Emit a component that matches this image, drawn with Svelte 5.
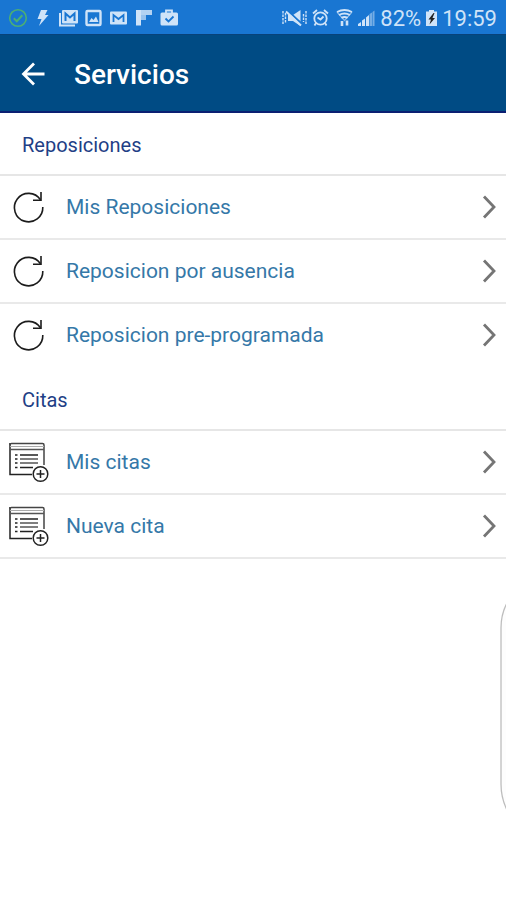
<script>
    const sections = [
        {
            title: 'Reposiciones',
            icon: 'refresh',
            items: ['Mis Reposiciones', 'Reposicion por ausencia', 'Reposicion pre-programada']
        },
        {
            title: 'Citas',
            icon: 'form',
            items: ['Mis citas', 'Nueva cita']
        }
    ];
</script>

<style>
    :global(body) {
        margin: 0;
        background-color: #fff;
        font-family: Roboto, sans-serif;
    }

    .screen {
        position: relative;
        min-height: 100vh;
        overflow: hidden;
    }

    .status {
        display: flex;
        justify-content: space-between;
        align-items: center;
        box-sizing: border-box;
        height: 34px;
        padding: 2px 9px 0 8px;
        background-color: #1976d2;
        color: #cfe3f8;
        font-size: 22px;
    }

    .status div {
        display: flex;
        align-items: center;
    }

    .notifications {
        gap: 5px;
    }

    .system {
        gap: 4px;
    }

    .toolbar {
        display: flex;
        align-items: center;
        box-sizing: border-box;
        height: 79px;
        padding: 2px 18px 0;
        gap: 26px;
        background-color: #004b84;
        border-top: 1px solid #08427a;
        border-bottom: 2px solid #0b1f72;
        color: #fff;
    }

    .back {
        display: flex;
        padding: 0;
        border: none;
        background: none;
        color: inherit;
        cursor: pointer;
    }

    h1 {
        margin: 0;
        font-size: 28px;
        font-weight: 500;
    }

    h2 {
        box-sizing: border-box;
        height: 63px;
        margin: 0;
        padding-left: 22px;
        line-height: 64px;
        font-size: 20px;
        font-weight: 400;
        color: #1f3f86;
        border-bottom: 2px solid #e6e6e6;
    }

    ul {
        margin: 0;
        padding: 0;
        list-style: none;
    }

    li {
        box-sizing: border-box;
        height: 64px;
        border-bottom: 2px solid #e9e9e9;
    }

    section:not(:last-child) li:last-child {
        border-bottom-color: transparent;
    }

    li a {
        display: flex;
        align-items: center;
        height: 100%;
        padding: 0 9px 0 8px;
        font-size: 21px;
        color: #3578a8;
        text-decoration: none;
    }

    .label {
        flex: 1;
        margin-left: 16px;
    }

    .edge {
        position: absolute;
        right: 0;
        top: 602px;
    }
</style>

<div class="screen">
    <div class="status">
        <div class="notifications">
            <svg width="20" height="20" viewBox="0 0 20 20" fill="none" stroke="#4caf73" stroke-width="1.6">
                <circle cx="10" cy="10" r="8.3" />
                <path d="M5.8 10.3l3 2.9 5.5-6" stroke-width="2" />
            </svg>
            <svg width="20" height="20" viewBox="0 0 20 20" fill="currentColor">
                <path d="M8 2h6.500l-2.500 5h3.500L6 18l2.500-7H4.500z" />
            </svg>
            <svg width="21" height="20" viewBox="0 0 21 20">
                <path d="M2 5v12.500h15" fill="none" stroke="currentColor" stroke-width="2" />
                <rect x="4" y="2" width="16" height="13.500" rx="1" fill="currentColor" />
                <path d="M7.500 13V5.500l4.500 4 4.500-4V13" fill="none" stroke="#1976d2" stroke-width="2" />
            </svg>
            <svg width="20" height="20" viewBox="0 0 20 20">
                <rect x="2.500" y="3" width="14" height="14" rx="1" fill="none" stroke="currentColor" stroke-width="2.400" />
                <path d="M5 14l2.500-4 2 2 2.500-3.500L14.500 14z" fill="currentColor" />
            </svg>
            <svg width="20" height="20" viewBox="0 0 20 20">
                <rect x="1" y="3.500" width="17" height="13" rx="1" fill="currentColor" />
                <path d="M4.500 14V7l5 4 5-4v7" fill="none" stroke="#1976d2" stroke-width="1.800" />
            </svg>
            <svg width="20" height="20" viewBox="0 0 20 20" fill="currentColor">
                <path d="M2 2h16v5H2z" opacity="0.85" />
                <path d="M2 2h5v15.500H2z" />
                <path d="M7 7h5v5H7z" opacity="0.7" />
            </svg>
            <svg width="22" height="20" viewBox="0 0 22 20">
                <rect x="1.500" y="4.500" width="17.500" height="13" rx="1.500" fill="currentColor" />
                <path d="M7 5V2.500h6V5" fill="none" stroke="currentColor" stroke-width="1.800" />
                <path d="M6.500 10.500l3 3 5-5" fill="none" stroke="#1976d2" stroke-width="1.800" />
            </svg>
        </div>
        <div class="system">
            <svg width="27" height="20" viewBox="0 0 27 20">
                <path d="M7 7h5l7.500-5v16L12 13H7z" fill="currentColor" />
                <path d="M6.500 2.500l15 14" stroke="#1976d2" stroke-width="2" />
                <path d="M5 3.500l15 14" stroke="currentColor" stroke-width="2" />
                <path d="M2 3v14M4.500 5v10M22.500 6v8M25 3v14" stroke="currentColor" stroke-width="1.400" stroke-dasharray="2.500 1" />
            </svg>
            <svg width="17" height="20" viewBox="0 0 17 20" fill="none" stroke="currentColor" stroke-width="1.800">
                <circle cx="8.500" cy="10.500" r="6.200" />
                <path d="M5.500 9.500l3 2 3-3M1 5.500L5 2M16 5.500L12 2M4 15l-1.500 2.500M13 15l1.500 2.500" />
            </svg>
            <svg width="20" height="20" viewBox="0 0 20 20" fill="none" stroke="currentColor" stroke-width="1.900">
                <path d="M4 4q7.500-4 15 0M6 7q5.500-3 11 0M8.500 10q3-2 6 0" />
                <path d="M4 4l7.500 8.500L19 4" stroke-width="1.200" opacity="0.600" />
                <path d="M9 18v-5M14 12.500v5" stroke-width="2.600" />
            </svg>
            <svg width="19" height="20" viewBox="0 0 19 20" fill="currentColor">
                <path d="M1 18v-2l3-2v4zM5 18v-5.500l3-2V18zM9 18V9.500L12 7v11z" />
                <path d="M12.500 18V6L15 4.500V18zM15.500 18V4l2-1.500V18z" opacity="0.500" />
            </svg>
            <span>82%</span>
            <svg width="13" height="20" viewBox="0 0 13 20">
                <path d="M1 3.500h3V2h5v1.500h3V18H1z" fill="currentColor" />
                <path d="M8.500 5L3.500 11.500H6L4.500 16.500 10 10H7.500l2-5z" fill="#222" />
            </svg>
            <span>19:59</span>
        </div>
    </div>

    <header class="toolbar">
        <button class="back" aria-label="Volver">
            <svg width="30" height="30" viewBox="0 0 30 30" fill="none" stroke="currentColor" stroke-width="2.800">
                <path d="M26.500 15H6M16 4.500L5.500 15 16 25.500" />
            </svg>
        </button>
        <h1>Servicios</h1>
    </header>

    <main>
        {#each sections as section}
            <section>
                <h2>{section.title}</h2>
                <ul>
                    {#each section.items as item}
                        <li>
                            <a href="#servicio">
                                {#if section.icon === 'refresh'}
                                    <svg width="42" height="42" viewBox="0 0 42 42" fill="none" stroke="#1c1c1c" stroke-width="1.600">
                                        <path d="M34.800 21a14.200 14.200 0 1 1-2.300-7.200" />
                                        <path d="M33 6v8.300H25" />
                                    </svg>
                                {:else}
                                    <svg width="42" height="42" viewBox="0 0 42 42" fill="none" stroke="#222" stroke-width="1.500">
                                        <path d="M24 33.500H2V2" />
                                        <path d="M36 24V4q0-1.500-1.500-1.500h-31Q2 2.500 2 4" stroke="#444" />
                                        <path d="M2 5.500h34" stroke="#aaa" stroke-width="1" />
                                        <path d="M2 8.500h34" stroke="#555" />
                                        <path d="M12 14h18M12 26.500h13" />
                                        <path d="M12 18h18M12 22h18" stroke="#555" />
                                        <path d="M7 14h2.500M7 18h2.500M7 22h2.500M7 26.500h2.500" />
                                        <circle cx="32.500" cy="33" r="7.300" fill="#fff" />
                                        <path d="M28.500 33h8M32.500 29v8" />
                                    </svg>
                                {/if}
                                <span class="label">{item}</span>
                                <svg width="16" height="26" viewBox="0 0 16 26" fill="none" stroke="#757575" stroke-width="2.800">
                                    <path d="M3 2.500L13 13 3 23.500" />
                                </svg>
                            </a>
                        </li>
                    {/each}
                </ul>
            </section>
        {/each}
    </main>

    <svg class="edge" width="6" height="210" viewBox="0 0 6 210" fill="#fdfdfd" stroke="#bdbdbd" stroke-width="1.300">
        <path d="M7 1Q1 12 1 26v156q0 14 6 26" />
    </svg>
</div>
